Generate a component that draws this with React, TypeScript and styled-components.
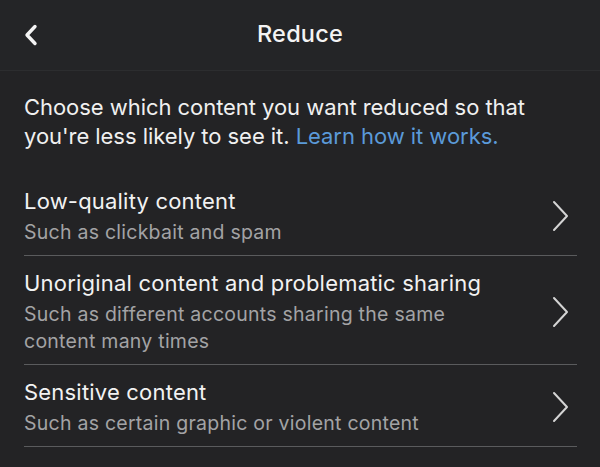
import styled, { createGlobalStyle } from 'styled-components';

const GlobalStyle = createGlobalStyle`
  html, body {
    margin: 0;
    padding: 0;
    background: #232325;
  }
  body {
    font-family: Inter, "Noto Sans", "Liberation Sans", sans-serif;
    -webkit-font-smoothing: antialiased;
  }
`;

const Screen = styled.div`
  width: 600px;
  height: 467px;
  background: #232325;
  color: #f2f2f2;
  overflow: hidden;
`;

const Header = styled.header`
  height: 70px;
  display: grid;
  grid-template-columns: 60px 1fr 60px;
  align-items: center;
  background: #242527;
  border-bottom: 1px solid #2c2d2f;
`;

const BackButton = styled.button`
  background: none;
  border: none;
  padding: 0 0 0 23px;
  height: 100%;
  display: flex;
  align-items: center;
  color: #f4f4f4;
  cursor: pointer;
`;

const Title = styled.h1`
  margin: 0;
  text-align: center;
  font-size: 23.5px;
  font-weight: 500;
  letter-spacing: 0.2px;
  color: #f4f4f4;
  padding-bottom: 4px;
`;

const Body = styled.main`
  padding: 22px 23px 0 24px;
`;

const Intro = styled.p`
  margin: 0 0 23px;
  max-width: 540px;
  font-size: 22px;
  line-height: 29px;
  letter-spacing: -0.05px;
  color: #f0f0f0;
`;

const LearnLink = styled.a`
  color: #5b9ad9;
  text-decoration: none;
`;

const List = styled.ul`
  list-style: none;
  margin: 0;
  padding: 0;
`;

const Row = styled.li`
  display: flex;
  align-items: center;
  padding: 12px 0 9px;
  border-bottom: 1px solid #5a5b5d;
`;

const RowText = styled.div`
  flex: 1;
  padding-right: 50px;
`;

const RowTitle = styled.div`
  font-size: 22px;
  line-height: 30px;
  letter-spacing: 0.2px;
  color: #f2f2f2;
`;

const RowSub = styled.div`
  margin-top: 3px;
  font-size: 19.5px;
  line-height: 27px;
  letter-spacing: 0.25px;
  color: #a3a3a5;
`;

const Chevron = styled.svg`
  flex: none;
  margin-right: 6px;
  color: #d4d4d4;
`;

const items = [
  { title: 'Low-quality content', sub: 'Such as clickbait and spam' },
  {
    title: 'Unoriginal content and problematic sharing',
    sub: 'Such as different accounts sharing the same content many times',
  },
  { title: 'Sensitive content', sub: 'Such as certain graphic or violent content' },
];

export default function App() {
  return (
    <>
      <GlobalStyle />
      <Screen>
        <Header>
          <BackButton aria-label="Back">
            <svg width="16" height="22" viewBox="0 0 16 22" fill="none">
              <path
                d="M12 2.5 L4 11 L12 19.5"
                stroke="currentColor"
                strokeWidth="3.4"
                strokeLinecap="round"
                strokeLinejoin="round"
              />
            </svg>
          </BackButton>
          <Title>Reduce</Title>
          <span />
        </Header>
        <Body>
          <Intro>
            Choose which content you want reduced so that you're less likely to see it.{' '}
            <LearnLink href="#">Learn how it works.</LearnLink>
          </Intro>
          <List>
            {items.map((item) => (
              <Row key={item.title}>
                <RowText>
                  <RowTitle>{item.title}</RowTitle>
                  <RowSub>{item.sub}</RowSub>
                </RowText>
                <Chevron width="20" height="32" viewBox="0 0 20 32" fill="none">
                  <path
                    d="M3 2 L16 16 L3 30"
                    stroke="currentColor"
                    strokeWidth="2"
                    strokeLinecap="round"
                    strokeLinejoin="round"
                  />
                </Chevron>
              </Row>
            ))}
          </List>
        </Body>
      </Screen>
    </>
  );
}
